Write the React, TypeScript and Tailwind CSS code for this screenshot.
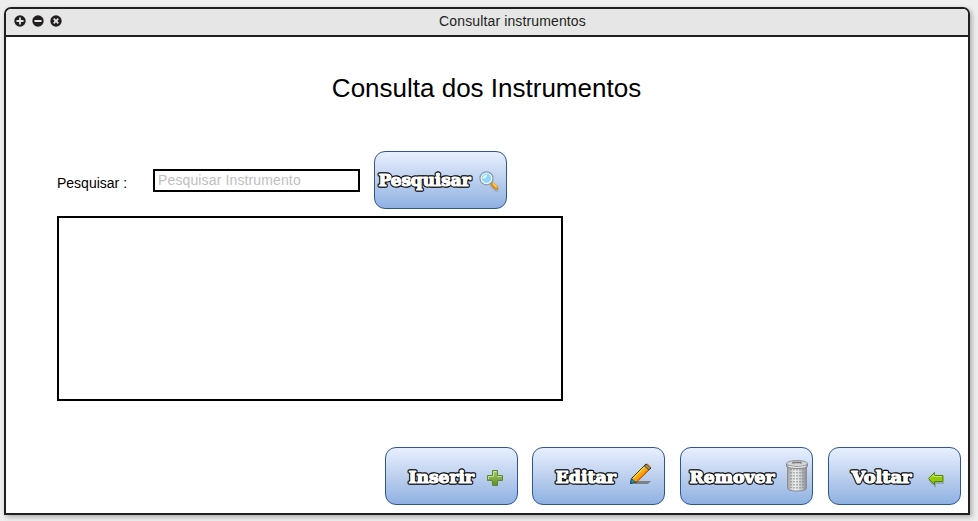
import type { ReactNode } from 'react';

type ImageButtonProps = {
  label: string;
  textX: number;
  textY?: number;
  textWidth: number;
  children: ReactNode;
};

function ImageButton({ label, textX, textY = 36, textWidth, children }: ImageButtonProps) {
  return (
    <button
      type="button"
      className="h-[58px] w-[133px] shrink-0 overflow-hidden rounded-[11px] border border-[#2f5597] bg-linear-to-b from-[#e8f0ff] via-[#bdd0ee] to-[#8fb1e2]"
    >
      <svg viewBox="1 1 131 56" className="block h-full w-full" aria-label={label}>
        <text
          x={textX}
          y={textY}
          textLength={textWidth}
          lengthAdjust="spacingAndGlyphs"
          className="fill-black stroke-black stroke-[3.3px] font-['DejaVu_Serif',serif] text-[16px] font-bold"
          strokeLinejoin="round"
        >
          {label}
        </text>
        <text
          x={textX}
          y={textY}
          textLength={textWidth}
          lengthAdjust="spacingAndGlyphs"
          aria-hidden="true"
          className="fill-white stroke-white stroke-[1.2px] font-['DejaVu_Serif',serif] text-[16px] font-bold"
          strokeLinejoin="round"
        >
          {label}
        </text>
        {children}
      </svg>
    </button>
  );
}

function Magnifier() {
  return (
    <g>
      <path d="M117.500 34l5 4.500" stroke="#8a8f98" strokeWidth="4.500" strokeLinecap="round" opacity=".4" />
      <path d="M116 31l2.500 2.500" stroke="#8b929b" strokeWidth="2" />
      <path d="M118.800 33.400l3.300 3.400" stroke="#d88a1c" strokeWidth="4.200" strokeLinecap="round" />
      <path d="M119.400 32.900l2.800 3" stroke="#ffd04a" strokeWidth="1.800" strokeLinecap="round" />
      <circle cx="112.500" cy="27.300" r="6.400" fill="#8fd6fa" stroke="#8998a8" strokeWidth="1.500" />
      <circle cx="112.500" cy="27.300" r="5.300" fill="none" stroke="#eef7fc" strokeWidth="1.200" />
      <path d="M108.700 28a4 4 0 0 1 4.500-4.300c-.5 2.700-2 3.900-4.500 4.300z" fill="#e4f8ff" />
    </g>
  );
}

function Plus() {
  return (
    <g>
      <path d="M107.500 23.500h5v5h5v5h-5v5h-5v-5h-5v-5h5z" fill="url(#plusFill)" stroke="#5c8a31" />
      <path d="M108.500 29.500v-5h3M103.500 32v-2.500h5M112.500 29.500h4" fill="none" stroke="#c5df98" />
      <defs>
        <linearGradient id="plusFill" x1="0" y1="0" x2="0" y2="1">
          <stop offset="0" stopColor="#a9cb75" />
          <stop offset="1" stopColor="#5f8f20" />
        </linearGradient>
      </defs>
    </g>
  );
}

function Pencil() {
  return (
    <g>
      <path d="M101 37l4-3h14l-3 3z" fill="#7c7f85" />
      <path d="M98.500 36.500l1-5L114 17l5 4-14.500 14z" fill="#f8a414" stroke="#27201c" />
      <path d="M101.500 31L114 18.500" stroke="#ffd52e" strokeWidth="1.600" />
      <path d="M105 34l12.500-12.500" stroke="#ee7809" strokeWidth="1.600" />
      <path d="M98.700 36.300l.8-4.600 4.200 3.500z" fill="#2395ad" stroke="#125267" strokeWidth=".8" />
      <path d="M112.300 19l1.900-1.700 4.400 3.600-1.700 1.900z" fill="#79a886" stroke="#27201c" strokeWidth=".7" />
      <path d="M115 17l3.500 3.500" stroke="#e8601a" strokeWidth="1.300" />
    </g>
  );
}

function Trash() {
  return (
    <g>
      <path d="M107.500 19v22q0 3 9.500 3t9.500-3V19z" fill="url(#canFill)" stroke="#8c8e91" />
      <path d="M111 22v19M114 22v20M117 22v20M120 22v20M123 22v19" stroke="#85888b" strokeWidth="1.200" strokeDasharray="1.500 1.500" />
      <path d="M106.500 16.500v2.500q0 2.500 10.500 2.500t10.500-2.500v-2.500z" fill="#b6b8ba" stroke="#85878a" />
      <ellipse cx="117" cy="16.500" rx="10.500" ry="3" fill="#d3d5d6" stroke="#929497" />
      <path d="M113 16.800v-1.300h8v1.300" fill="none" stroke="#77797c" strokeWidth="1.300" />
      <path d="M108.500 19.500q8 2 17 0" fill="none" stroke="#eeeeee" />
      <defs>
        <linearGradient id="canFill">
          <stop offset="0" stopColor="#9b9da0" />
          <stop offset=".35" stopColor="#eeeff0" />
          <stop offset=".6" stopColor="#dedfe0" />
          <stop offset="1" stopColor="#898b8e" />
        </linearGradient>
      </defs>
    </g>
  );
}

function BackArrow() {
  return (
    <g>
      <path d="M101 33l6 6v-3h9" fill="none" stroke="#56754c" strokeWidth="1.500" opacity=".45" />
      <path d="M100.500 31.500l6-6v3h8.500v6h-8.500v3z" fill="#93c90b" stroke="#52820b" strokeLinejoin="round" />
      <path d="M102 31.500l3.800-3.800v1.800h8" fill="none" stroke="#c9ed57" />
    </g>
  );
}

function WindowControl({ d }: { d: string }) {
  return (
    <svg viewBox="0 0 12 12" className="size-3">
      <circle cx="6" cy="6" r="5.700" fill="#231f20" />
      <path d={d} stroke="#e6e6e6" strokeWidth="1.800" />
    </svg>
  );
}

export default function App() {
  return (
    <div className="h-[521px] w-[978px] overflow-hidden bg-[#eeeeee] pt-[7px] pl-1 font-['Liberation_Sans',Arial,sans-serif] text-black">
      <main className="flex h-[508px] w-[966px] flex-col overflow-hidden rounded-t-[7px] border-2 border-[#231f20] bg-white shadow-[2px_2px_5px_rgba(0,0,0,0.28)]">
        <header className="box-content flex h-[26px] shrink-0 items-center border-b-2 border-[#231f20] bg-[#e6e6e6]">
          <div className="flex w-[101px] gap-1.5 pb-[3px] pl-[7.500px]">
            <WindowControl d="M6 2.500v7M2.500 6h7" />
            <WindowControl d="M2.500 6h7" />
            <WindowControl d="M3.700 3.700l4.600 4.600M8.300 3.700L3.700 8.300" />
          </div>
          <div className="flex-1 pr-[50px] pb-[2px] text-center text-[14px] leading-5 tracking-[0.13px] text-[#231f20]">
            Consultar instrumentos
          </div>
        </header>

        <h1 className="mt-[33px] h-9 pr-px text-center text-[26px] leading-9 whitespace-nowrap">
          Consulta dos Instrumentos
        </h1>

        <div className="mt-[45px] ml-[51px] flex h-[58px]">
          <label htmlFor="search" className="mt-[22px] w-24 text-[14px] leading-5">
            Pesquisar :
          </label>
          <input
            id="search"
            placeholder="Pesquisar Instrumento"
            className="mt-[18px] mr-[14px] h-[23px] w-[207px] border-2 border-black px-[3px] pb-px text-[14px] leading-[18px] tracking-[0.13px] placeholder:text-[#c0c0c0]"
          />
          <ImageButton label="Pesquisar" textX={4.5} textY={35} textWidth={92}>
            <Magnifier />
          </ImageButton>
        </div>

        <section className="mt-[7px] ml-[51px] h-[185px] w-[506px] shrink-0 border-2 border-black" />

        <footer className="mt-[46px] ml-[379px] flex gap-[15px]">
          <div className="-mr-px flex">
            <ImageButton label="Inserir" textX={23.5} textWidth={65.5}>
              <Plus />
            </ImageButton>
          </div>
          <ImageButton label="Editar" textX={23.5} textWidth={60.5}>
            <Pencil />
          </ImageButton>
          <ImageButton label="Remover" textX={9.5} textWidth={85}>
            <Trash />
          </ImageButton>
          <ImageButton label="Voltar" textX={23.5} textWidth={60}>
            <BackArrow />
          </ImageButton>
        </footer>
      </main>
    </div>
  );
}
